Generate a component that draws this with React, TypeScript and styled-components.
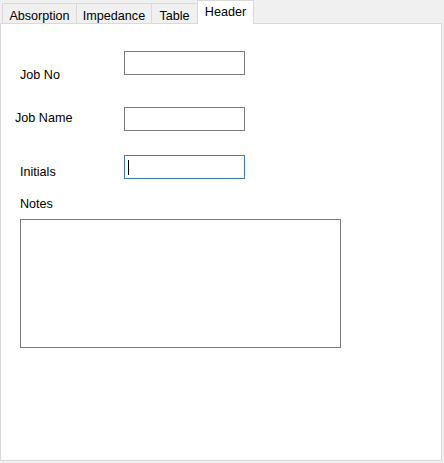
import React from "react";
import styled, { createGlobalStyle } from "styled-components";

const GlobalStyle = createGlobalStyle`
  html, body {
    margin: 0;
    padding: 0;
    background: #f0f0f0;
  }
  body {
    font-family: "Liberation Sans", Arial, sans-serif;
    font-size: 12.6px;
    color: #000;
  }
`;

const Window = styled.div`
  width: 444px;
  height: 463px;
  background: #f0f0f0;
  display: flex;
  flex-direction: column;
`;

const TabStrip = styled.div`
  display: flex;
  align-items: flex-end;
  height: 24px;
  padding-left: 2px;
  position: relative;
  z-index: 1;
`;

const Tab = styled.div<{ $w: number; $active?: boolean }>`
  box-sizing: border-box;
  width: ${(p) => p.$w}px;
  height: ${(p) => (p.$active ? 24 : 21)}px;
  margin-left: -1px;
  border: 1px solid #d9d9d9;
  border-bottom: ${(p) => (p.$active ? "none" : "1px solid #d9d9d9")};
  background: ${(p) => (p.$active ? "#fff" : "#f0f0f0")};
  display: flex;
  justify-content: center;
  align-items: flex-start;
  padding-top: ${(p) => (p.$active ? 4 : 5)}px;
  line-height: 14px;
  &:first-child {
    margin-left: 0;
  }
`;

const Panel = styled.div`
  box-sizing: border-box;
  width: 442px;
  height: 438px;
  margin-top: -1px;
  border: 1px solid #d9d9d9;
  background: #fff;
  display: flex;
  flex-direction: column;
`;

const FieldRow = styled.div<{ $top: number }>`
  display: flex;
  align-items: flex-start;
  margin-top: ${(p) => p.$top}px;
`;

const Label = styled.div<{ $x: number; $y?: number }>`
  box-sizing: border-box;
  width: 123px;
  padding-left: ${(p) => p.$x - 1}px;
  padding-top: ${(p) => p.$y ?? 0}px;
  line-height: 14px;
  white-space: nowrap;
`;

const TextBox = styled.div<{ $focused?: boolean }>`
  box-sizing: border-box;
  width: 121px;
  height: 24px;
  border: 1px solid ${(p) => (p.$focused ? "#3a7fb5" : "#7a7a7a")};
  background: #fff;
  position: relative;
`;

const Caret = styled.span`
  position: absolute;
  left: 3px;
  top: 4px;
  width: 1px;
  height: 15px;
  background: #000;
`;

const NotesBox = styled.div`
  box-sizing: border-box;
  width: 321px;
  height: 129px;
  margin-top: 8px;
  margin-left: 19px;
  border: 1px solid #7a7a7a;
  background: #fff;
`;

const tabs = [
  { label: "Absorption", w: 75 },
  { label: "Impedance", w: 76 },
  { label: "Table", w: 47 },
  { label: "Header", w: 57, active: true },
];

export default function App() {
  return (
    <>
      <GlobalStyle />
      <Window>
        <TabStrip>
          {tabs.map((t) => (
            <Tab key={t.label} $w={t.w} $active={t.active}>
              {t.label}
            </Tab>
          ))}
        </TabStrip>
        <Panel>
          <FieldRow $top={27}>
            <Label $x={20} $y={17}>Job No</Label>
            <TextBox />
          </FieldRow>
          <FieldRow $top={25}>
            <Label $x={15} $y={4}>Job Name</Label>
            <TextBox />
          </FieldRow>
          <FieldRow $top={24}>
            <Label $x={20} $y={10}>Initials</Label>
            <TextBox $focused>
              <Caret />
            </TextBox>
          </FieldRow>
          <FieldRow $top={18}>
            <Label $x={20}>Notes</Label>
          </FieldRow>
          <NotesBox />
        </Panel>
      </Window>
    </>
  );
}
